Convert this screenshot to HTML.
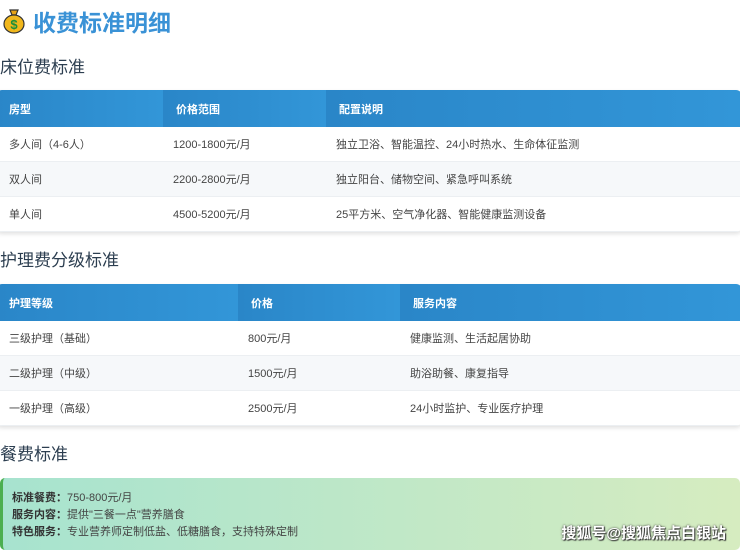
<!DOCTYPE html>
<html><head><meta charset="utf-8"><style>
body{margin:0;width:740px;height:548px;overflow:hidden;background:#fff;font-family:"Liberation Sans","Noto Sans CJK SC",sans-serif;color:#333;position:relative}
h1{position:absolute;left:2px;top:4px;margin:0;font-size:23px;color:#3a92d6;font-weight:bold;display:flex;align-items:center}
h2{position:absolute;left:0;margin:0;font-size:17px;font-weight:normal;color:#2c3e50}
table{position:absolute;left:-4px;width:746px;border-collapse:collapse;font-size:11px;border-radius:6px;overflow:hidden;box-shadow:0 2px 4px rgba(0,0,0,.12)}
th{height:37px;text-align:left;color:#fff;font-weight:bold;padding:0 0 0 13px;background:linear-gradient(90deg,#2a86c8,#3296d8)}
td{height:34px;padding:0 0 0 10px;border-bottom:1px solid #eceff2;color:#444}
td:first-child{padding-left:13px}
tr:nth-child(odd) td{background:#f6f8fa}
.meal{position:absolute;left:0;top:478px;width:740px;height:72px;border-left:3px solid #4caf50;border-radius:5px;background:linear-gradient(90deg,#a7e3cf,#d6ecc0);font-size:11px;color:#444;box-sizing:border-box;padding:12px 0 0 9px;line-height:17px}
.meal b{color:#333}
.wm{position:absolute;right:14px;top:522px;color:#fff;font-size:15px;font-weight:bold;text-shadow:0 0 2px #333,1px 1px 1px #333}
</style></head><body>
<h1><svg width="24" height="26" viewBox="0 0 24 26"><path d="M8 2h8l-2 5h-4z" fill="#e8a317" stroke="#333" stroke-width="1.2"/><ellipse cx="12" cy="16" rx="10" ry="9" fill="#f1b71c" stroke="#333" stroke-width="1.2"/><text x="12" y="21" font-size="13" text-anchor="middle" fill="#1a8f3a" font-weight="bold" font-family="Liberation Sans">$</text></svg><span style="margin-left:7px">收费标准明细</span></h1>
<h2 style="top:53px">床位费标准</h2>
<table style="top:90px"><tr><th style="width:154px">房型</th><th style="width:150px">价格范围</th><th>配置说明</th></tr>
<tr><td>多人间（4-6人）</td><td>1200-1800元/月</td><td>独立卫浴、智能温控、24小时热水、生命体征监测</td></tr>
<tr><td>双人间</td><td>2200-2800元/月</td><td>独立阳台、储物空间、紧急呼叫系统</td></tr>
<tr><td>单人间</td><td>4500-5200元/月</td><td>25平方米、空气净化器、智能健康监测设备</td></tr></table>
<h2 style="top:246px">护理费分级标准</h2>
<table style="top:284px"><tr><th style="width:229px">护理等级</th><th style="width:149px">价格</th><th>服务内容</th></tr>
<tr><td>三级护理（基础）</td><td>800元/月</td><td>健康监测、生活起居协助</td></tr>
<tr><td>二级护理（中级）</td><td>1500元/月</td><td>助浴助餐、康复指导</td></tr>
<tr><td>一级护理（高级）</td><td>2500元/月</td><td>24小时监护、专业医疗护理</td></tr></table>
<h2 style="top:440px">餐费标准</h2>
<div class="meal"><b>标准餐费：</b>750-800元/月<br><b>服务内容：</b>提供"三餐一点"营养膳食<br><b>特色服务：</b>专业营养师定制低盐、低糖膳食，支持特殊定制</div>
<div class="wm">搜狐号@搜狐焦点白银站</div>
</body></html>
